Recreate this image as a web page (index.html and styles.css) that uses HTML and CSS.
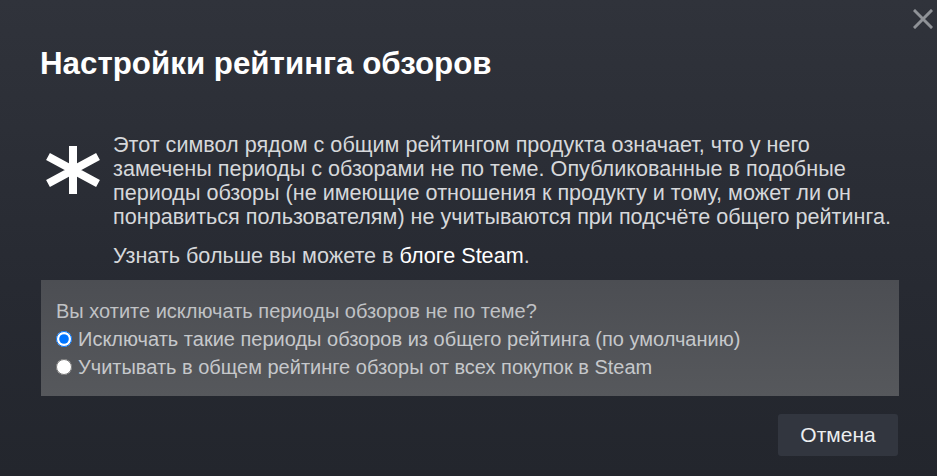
FILE: index.html
```html
<!DOCTYPE html>
<html lang="ru">
<head>
<meta charset="utf-8">
<title>Настройки рейтинга обзоров</title>
<link rel="stylesheet" href="styles.css">
</head>
<body>
<div class="modal">
  <button class="close" aria-label="Закрыть">
    <svg width="20" height="20" viewBox="0 0 20 20"><path d="M2 2 L18 18 M18 2 L2 18" stroke="#8f9297" stroke-width="3" stroke-linecap="square" fill="none"/></svg>
  </button>
  <h1 class="title">Настройки рейтинга обзоров</h1>
  <div class="desc">
    <div class="star">
      <svg width="60" height="52" viewBox="0 0 60 52"><path d="M30 2 L30 50 M5 12.5 L55 39.5 M5 39.5 L55 12.5" stroke="#ffffff" stroke-width="8" fill="none"/></svg>
    </div>
    <div class="desc-text">
      <p class="para">Этот символ рядом с общим рейтингом продукта означает, что у него замечены периоды с обзорами не по теме. Опубликованные в подобные периоды обзоры (не имеющие отношения к продукту и тому, может ли он понравиться пользователям) не учитываются при подсчёте общего рейтинга.</p>
      <p class="para para-2">Узнать больше вы можете в <a class="link" href="#">блоге Steam</a>.</p>
    </div>
  </div>
  <div class="options">
    <div class="question">Вы хотите исключать периоды обзоров не по теме?</div>
    <label class="option"><input type="radio" name="mode" checked> Исключать такие периоды обзоров из общего рейтинга (по умолчанию)</label>
    <label class="option"><input type="radio" name="mode"> Учитывать в общем рейтинге обзоры от всех покупок в Steam</label>
  </div>
  <div class="actions">
    <button class="btn">Отмена</button>
  </div>
</div>
</body>
</html>
```
FILE: styles.css
```css
html, body {
  margin: 0;
  height: 100%;
}
body {
  background: linear-gradient(to bottom, #30333b 0%, #272a32 60%, #23262d 100%);
  font-family: "Liberation Sans", Arial, sans-serif;
  color: #d6d8db;
  overflow: hidden;
}
.modal {
  position: relative;
  padding: 45px 38px 0 40px;
}
.close {
  position: absolute;
  top: 9px;
  right: 4px;
  padding: 0;
  border: 0;
  background: none;
  width: 20px;
  height: 20px;
  line-height: 0;
}
.title {
  margin: 0;
  font-size: 31.3px;
  line-height: 38px;
  font-weight: bold;
  color: #ffffff;
}
.desc {
  display: flex;
  margin-top: 50px;
}
.star {
  width: 73px;
  flex: none;
  padding: 11px 0 0 3px;
  box-sizing: border-box;
  line-height: 0;
}
.desc-text {
  flex: 1;
  margin-right: -10px;
}
.para {
  margin: 0;
  font-size: 21.6px;
  line-height: 24px;
}
.para-2 {
  margin-top: 15px;
}
.link {
  color: #ffffff;
  text-decoration: none;
}
.options {
  margin-top: 12px;
  margin-left: 1px;
  background: linear-gradient(to bottom, #4c4e53, #56585c);
  padding: 17px 15px 15px 15px;
  color: #c6c8cb;
  font-size: 20px;
  line-height: 28px;
}
.question {
  color: #c0c2c5;
}
.option {
  display: flex;
  align-items: center;
  gap: 6px;
}
.option input {
  margin: 0;
  width: 16px;
  height: 16px;
}
.actions {
  display: flex;
  justify-content: flex-end;
  margin-top: 18px;
}
.btn {
  width: 120px;
  height: 42px;
  border: 0;
  border-radius: 3px;
  background: #32363f;
  color: #eceef0;
  font-family: "Liberation Sans", Arial, sans-serif;
  font-size: 21px;
  margin-right: 1px;
}
```
